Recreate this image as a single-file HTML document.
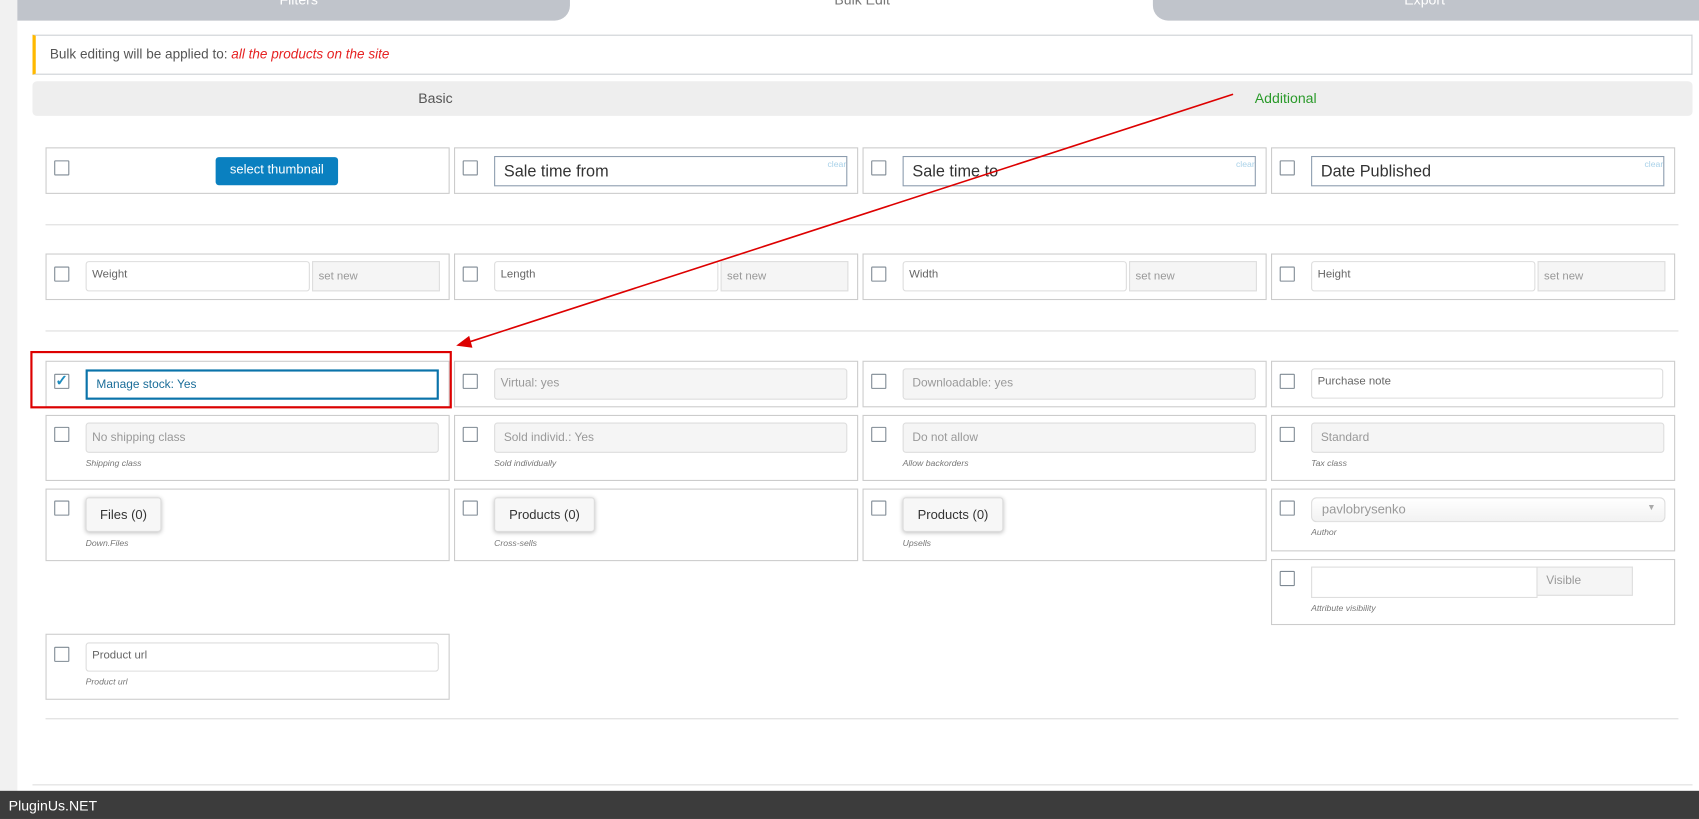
<!DOCTYPE html>
<html><head><meta charset="utf-8"><style>
*{box-sizing:border-box;margin:0;padding:0}
html,body{width:1699px;height:819px;overflow:hidden;background:#fff;font-family:"Liberation Sans",sans-serif}
#w{position:absolute;left:0;top:0;width:1568px;height:756px;transform:scale(1.08355,1.0833);transform-origin:0 0;background:#fff}
.a{position:absolute}
.cell{position:absolute;border:1px solid #ccc;background:#fff}
.cb{position:absolute;width:14px;height:14px;border:1px solid #7e8993;background:#fff;border-radius:1px}
.in{position:absolute;border:1px solid #ddd;border-radius:3px;background:#fff;font-size:10.5px;color:#666;padding:5px 0 0 5px}
.g{background:#f5f5f5;color:#999}
.lbl{position:absolute;font-size:8px;font-style:italic;color:#777}
.dt{position:absolute;border:1px solid #8c9cae;background:#fff;font-size:15px;color:#333;padding:5px 0 0 8px}
.clr{position:absolute;right:0;top:2px;font-size:8px;color:#a9d1e8}
.btn{position:absolute;background:#f7f7f7;border:1px solid #ddd;border-radius:3px;box-shadow:0 1px 4px rgba(0,0,0,.25);font-size:12px;color:#333;text-align:center;line-height:30px}
.hr{position:absolute;height:1px;background:#ddd}
</style></head><body><div id="w">
<div class="a" style="left:0;top:0;width:16px;height:730px;background:#f1f1f1"></div>
<div class="a" style="left:16px;top:0;width:510px;height:19px;background:#c0c4cb;border-radius:0 0 14px 0"></div>
<div class="a" style="left:1064px;top:0;width:504px;height:19px;background:#c0c4cb;border-radius:0 0 0 14px"></div>
<div class="a" style="left:258px;top:-8px;font-size:13px;color:#fff">Filters</div>
<div class="a" style="left:770px;top:-8px;font-size:13px;color:#777">Bulk Edit</div>
<div class="a" style="left:1296px;top:-8px;font-size:13px;color:#fff">Export</div>

<div class="a" style="left:30px;top:32px;width:1532px;height:37px;border:1px solid #ccd0d4;border-left:3px solid #ffb900;font-size:12.5px;color:#555;padding:10px 0 0 13px">Bulk editing will be applied to: <i style="color:#e62222">all the products on the site</i></div>
<div class="a" style="left:30px;top:75px;width:1532px;height:32px;background:#eee;border-radius:4px"></div>
<div class="a" style="left:386px;top:83px;font-size:13px;color:#555">Basic</div>
<div class="a" style="left:1158px;top:83px;font-size:13px;color:#2a9a2a">Additional</div>

<!-- row1 -->
<div class="cell" style="left:42px;top:136px;width:373px;height:43px"></div>
<div class="cell" style="left:419px;top:136px;width:373px;height:43px"></div>
<div class="cell" style="left:796px;top:136px;width:373px;height:43px"></div>
<div class="cell" style="left:1173px;top:136px;width:373px;height:43px"></div>
<div class="cb" style="left:50px;top:148px"></div><div class="cb" style="left:427px;top:148px"></div><div class="cb" style="left:804px;top:148px"></div><div class="cb" style="left:1181px;top:148px"></div>
<div class="a" style="left:199px;top:145px;width:113px;height:26px;background:#0a80c0;border-radius:3px;color:#fff;font-size:12px;text-align:center;line-height:22px">select thumbnail</div>
<div class="dt" style="left:456px;top:144px;width:326px;height:28px">Sale time from<span class="clr">clear</span></div>
<div class="dt" style="left:833px;top:144px;width:326px;height:28px">Sale time to<span class="clr">clear</span></div>
<div class="dt" style="left:1210px;top:144px;width:326px;height:28px">Date Published<span class="clr">clear</span></div>
<div class="hr" style="left:42px;top:207px;width:1507px"></div>

<!-- row2 -->
<div class="cell" style="left:42px;top:234px;width:373px;height:43px"></div>
<div class="cell" style="left:419px;top:234px;width:373px;height:43px"></div>
<div class="cell" style="left:796px;top:234px;width:373px;height:43px"></div>
<div class="cell" style="left:1173px;top:234px;width:373px;height:43px"></div>
<div class="cb" style="left:50px;top:246px"></div><div class="cb" style="left:427px;top:246px"></div><div class="cb" style="left:804px;top:246px"></div><div class="cb" style="left:1181px;top:246px"></div>
<div class="in" style="left:79px;top:241px;width:207px;height:28px">Weight</div><div class="in g" style="left:288px;top:241px;width:118px;height:28px;padding-top:7px;border-radius:0">set new</div>
<div class="in" style="left:456px;top:241px;width:207px;height:28px">Length</div><div class="in g" style="left:665px;top:241px;width:118px;height:28px;padding-top:7px;border-radius:0">set new</div>
<div class="in" style="left:833px;top:241px;width:207px;height:28px">Width</div><div class="in g" style="left:1042px;top:241px;width:118px;height:28px;padding-top:7px;border-radius:0">set new</div>
<div class="in" style="left:1210px;top:241px;width:207px;height:28px">Height</div><div class="in g" style="left:1419px;top:241px;width:118px;height:28px;padding-top:7px;border-radius:0">set new</div>
<div class="hr" style="left:42px;top:305px;width:1507px"></div>

<!-- row3 -->
<div class="cell" style="left:42px;top:333px;width:373px;height:43px"></div>
<div class="cell" style="left:419px;top:333px;width:373px;height:43px"></div>
<div class="cell" style="left:796px;top:333px;width:373px;height:43px"></div>
<div class="cell" style="left:1173px;top:333px;width:373px;height:43px"></div>
<div class="cb" style="left:50px;top:345px;color:#1e8cbe;font-size:14px;line-height:11px;font-weight:bold;text-align:center">✓</div><div class="cb" style="left:427px;top:345px"></div><div class="cb" style="left:804px;top:345px"></div><div class="cb" style="left:1181px;top:345px"></div>
<div class="in" style="left:79px;top:341px;width:326px;height:28px;border:2px solid #0a73aa;border-radius:0;color:#1a6d99;padding:6px 0 0 8px;font-size:11px">Manage stock: Yes</div>
<div class="a" style="left:28px;top:324px;width:389px;height:53px;border:2px solid #d00"></div>
<div class="in g" style="left:456px;top:340px;width:326px;height:29px;padding:7px 0 0 5px;font-size:11px">Virtual: yes</div>
<div class="in g" style="left:833px;top:340px;width:326px;height:29px;padding:7px 0 0 8px;font-size:11px">Downloadable: yes</div>
<div class="in" style="left:1210px;top:340px;width:325px;height:28px">Purchase note</div>

<!-- row4 -->
<div class="cell" style="left:42px;top:383px;width:373px;height:61px"></div>
<div class="cell" style="left:419px;top:383px;width:373px;height:61px"></div>
<div class="cell" style="left:796px;top:383px;width:373px;height:61px"></div>
<div class="cell" style="left:1173px;top:383px;width:373px;height:61px"></div>
<div class="cb" style="left:50px;top:394px"></div><div class="cb" style="left:427px;top:394px"></div><div class="cb" style="left:804px;top:394px"></div><div class="cb" style="left:1181px;top:394px"></div>
<div class="in g" style="left:79px;top:390px;width:326px;height:28px;padding:7px 0 0 5px;font-size:11px">No shipping class</div><div class="lbl" style="left:79px;top:423px">Shipping class</div>
<div class="in g" style="left:456px;top:390px;width:326px;height:28px;padding:7px 0 0 8px;font-size:11px">Sold individ.: Yes</div><div class="lbl" style="left:456px;top:423px">Sold individually</div>
<div class="in g" style="left:833px;top:390px;width:326px;height:28px;padding:7px 0 0 8px;font-size:11px">Do not allow</div><div class="lbl" style="left:833px;top:423px">Allow backorders</div>
<div class="in g" style="left:1210px;top:390px;width:326px;height:28px;padding:7px 0 0 8px;font-size:11px">Standard</div><div class="lbl" style="left:1210px;top:423px">Tax class</div>

<!-- row5 -->
<div class="cell" style="left:42px;top:451px;width:373px;height:67px"></div>
<div class="cell" style="left:419px;top:451px;width:373px;height:67px"></div>
<div class="cell" style="left:796px;top:451px;width:373px;height:67px"></div>
<div class="cell" style="left:1173px;top:451px;width:373px;height:58px"></div>
<div class="cb" style="left:50px;top:462px"></div><div class="cb" style="left:427px;top:462px"></div><div class="cb" style="left:804px;top:462px"></div><div class="cb" style="left:1181px;top:462px"></div>
<div class="btn" style="left:79px;top:459px;width:70px;height:32px">Files (0)</div><div class="lbl" style="left:79px;top:497px">Down.Files</div>
<div class="btn" style="left:456px;top:459px;width:93px;height:32px">Products (0)</div><div class="lbl" style="left:456px;top:497px">Cross-sells</div>
<div class="btn" style="left:833px;top:459px;width:93px;height:32px">Products (0)</div><div class="lbl" style="left:833px;top:497px">Upsells</div>
<div class="a" style="left:1210px;top:459px;width:327px;height:23px;border:1px solid #ddd;border-radius:5px;background:linear-gradient(#fff,#f2f2f2);font-size:12px;color:#999;padding:3px 0 0 9px">pavlobrysenko<span style="position:absolute;right:8px;top:4px;font-size:8px;color:#aaa">▼</span></div>
<div class="lbl" style="left:1210px;top:487px">Author</div>
<div class="cell" style="left:1173px;top:516px;width:373px;height:61px"></div>
<div class="cb" style="left:1181px;top:527px"></div>
<div class="in" style="left:1210px;top:523px;width:209px;height:29px;border-radius:0"></div>
<div class="in g" style="left:1418px;top:523px;width:89px;height:27px;border-radius:0;padding:6px 0 0 8px;font-size:11px">Visible</div>
<div class="lbl" style="left:1210px;top:557px">Attribute visibility</div>

<!-- row7 -->
<div class="cell" style="left:42px;top:585px;width:373px;height:61px"></div>
<div class="cb" style="left:50px;top:597px"></div>
<div class="in" style="left:79px;top:593px;width:326px;height:27px">Product url</div>
<div class="lbl" style="left:79px;top:625px">Product url</div>
<div class="hr" style="left:42px;top:663px;width:1507px"></div>
<div class="hr" style="left:30px;top:724px;width:1532px"></div>

<svg class="a" style="left:0;top:0" width="1568" height="756"><line x1="1138" y1="87" x2="432" y2="316" stroke="#d00" stroke-width="1.5"/><polygon points="421,319 433,310 436,321" fill="#d00"/></svg>

<div class="a" style="left:0;top:730px;width:1568px;height:26px;background:#3c3c3c;color:#fff;font-size:13px;padding:6px 0 0 8px">PluginUs.NET</div>
</div></body></html>
